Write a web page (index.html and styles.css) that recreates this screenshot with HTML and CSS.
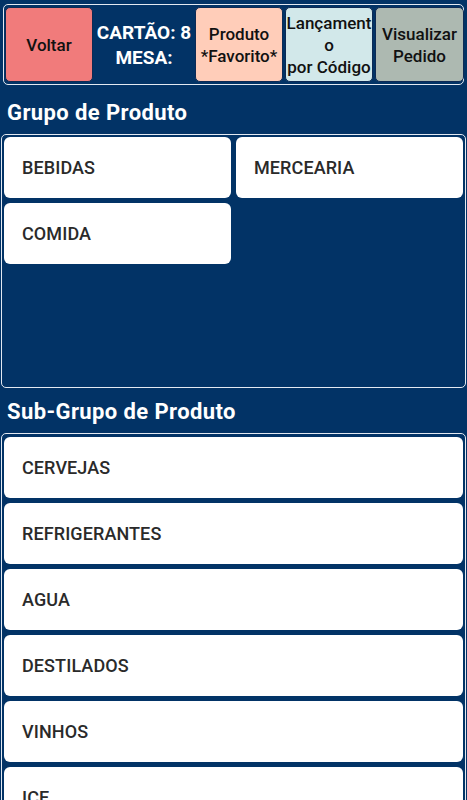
FILE: index.html
```html
<!DOCTYPE html>
<html lang="pt-BR">
<head>
  <meta charset="UTF-8">
  <meta name="viewport" content="width=device-width, initial-scale=1.0">
  <title>Pedido - Grupo de Produto</title>
  <link rel="stylesheet" href="styles.css">
</head>
<body>
  <div class="topbar">
    <button class="btn btn-voltar">Voltar</button>
    <div class="info">CARTÃO: 8<br>MESA:</div>
    <button class="btn btn-favorito">Produto<br>*Favorito*</button>
    <button class="btn btn-codigo">Lançament<br>o<br>por Código</button>
    <button class="btn btn-pedido">Visualizar<br>Pedido</button>
  </div>

  <h2 class="titulo">Grupo de Produto</h2>
  <div class="painel painel-grupo">
    <div class="card">BEBIDAS</div>
    <div class="card">MERCEARIA</div>
    <div class="card">COMIDA</div>
  </div>

  <h2 class="titulo">Sub-Grupo de Produto</h2>
  <div class="painel painel-sub">
    <div class="card">CERVEJAS</div>
    <div class="card">REFRIGERANTES</div>
    <div class="card">AGUA</div>
    <div class="card">DESTILADOS</div>
    <div class="card">VINHOS</div>
    <div class="card">ICE</div>
  </div>
</body>
</html>
```

FILE: styles.css
```css
/* Tela de lançamento - grupos e sub-grupos */
body {
  background: #023366;
  font-family: Roboto, "Liberation Sans", Arial, sans-serif;
  margin: 0;
  padding: 0;
}
.topbar {
  margin: 4px 3px 4px 3px;
  padding: 2px 0 2px 1px;
  border: 1px solid #e3e9f1;
  border-radius: 5px;
  display: grid;
  grid-template-columns: 88px 98px 88px 88px 89px;
  column-gap: 2px;
  height: 75px;
}
.btn {
  font-family: inherit;
  font-size: 17px;
  font-weight: 500;
  line-height: 22px;
  color: #111;
  border: 1px solid #0d2a55;
  border-radius: 5px;
  padding: 0;
  margin: 0;
  text-align: center;
  cursor: pointer;
}
.btn-voltar {
  background: #f17b7b;
}
.btn-favorito {
  background: #ffcdb9;
}
.btn-codigo {
  background: #d2e8ea;
}
.btn-pedido {
  background: #adb9b1;
}
.info {
  display: flex;
  align-items: center;
  justify-content: center;
  text-align: center;
  color: #fff;
  font-size: 19px;
  font-weight: bold;
  line-height: 25px;
  white-space: nowrap;
}
.titulo {
  margin: 0;
  padding: 2px 7px 0 7px;
  height: 43px;
  line-height: 43px;
  color: #fff;
  font-size: 22px;
  font-weight: bold;
  letter-spacing: 0.4px;
}
.painel {
  margin: 0 1px;
  padding: 2px;
  border: 1px solid #e3e9f1;
  border-radius: 5px;
}
.painel-grupo {
  height: 248px;
  display: grid;
  grid-template-columns: 1fr 1fr;
  grid-auto-rows: 61px;
  column-gap: 5px;
  row-gap: 5px;
  align-content: start;
}
.painel-sub {
  display: flex;
  flex-direction: column;
  gap: 5px;
  padding-top: 3px;
}
.card {
  background: #fff;
  border-radius: 6px;
  height: 61px;
  padding-left: 18px;
  display: flex;
  align-items: center;
  color: #2a2a2a;
  font-size: 18px;
  font-weight: 500;
  letter-spacing: 0.1px;
  box-sizing: border-box;
}
```
